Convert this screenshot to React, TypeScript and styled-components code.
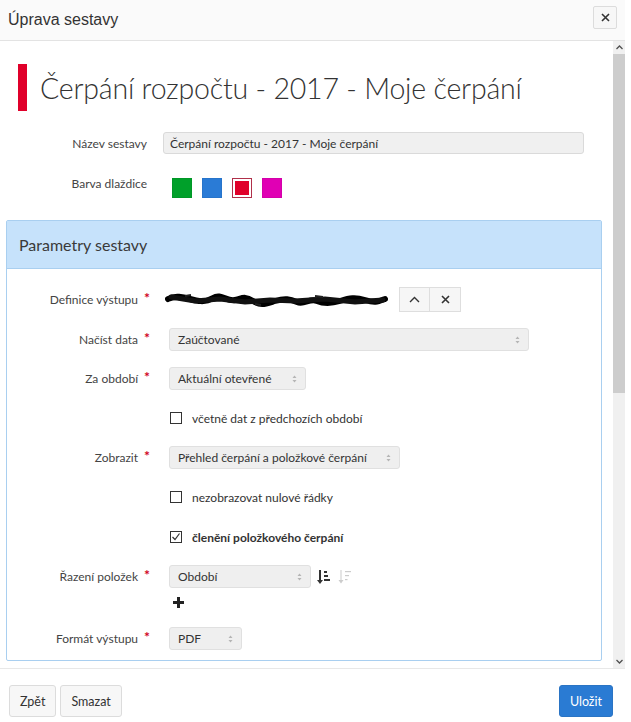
import React from 'react'
import styled, { createGlobalStyle } from 'styled-components'

const GlobalStyle = createGlobalStyle`
  html, body {
    margin: 0;
    padding: 0;
    background: #fff;
  }
  body {
    font-family: Lato, "Open Sans", sans-serif;
    color: #333;
  }
`

const Dialog = styled.div`
  width: 625px;
  height: 722px;
  display: flex;
  flex-direction: column;
  background: #fff;
`

const Header = styled.div`
  height: 40px;
  flex: none;
  display: flex;
  align-items: center;
  justify-content: space-between;
  padding: 0 8px 0 8px;
  border-bottom: 1px solid #e3e3e3;
  background: #fafafa;
`

const HeaderTitle = styled.div`
  font-family: "Liberation Sans", Arial, sans-serif;
  font-size: 16px;
  color: #333;
`

const CloseButton = styled.button`
  width: 24px;
  height: 23px;
  padding: 0;
  margin-top: -6px;
  display: flex;
  align-items: center;
  justify-content: center;
  border: 1px solid #dcdcdc;
  border-radius: 2px;
  background: #f7f7f7;
  color: #333;
`

const Body = styled.div`
  flex: none;
  height: 627px;
  display: flex;
  overflow: hidden;
`

const Content = styled.div`
  flex: 1;
  min-width: 0;
  padding: 23px 0 0 6px;
  overflow: hidden;
`

const Scrollbar = styled.div`
  width: 12px;
  flex: none;
  display: flex;
  flex-direction: column;
  background: #f0f0f0;
`

const ScrollArrow = styled.div`
  height: 13px;
  display: flex;
  align-items: center;
  justify-content: center;
  flex: none;
`

const ScrollTrack = styled.div`
  flex: 1;
  display: flex;
  flex-direction: column;
`

const ScrollThumb = styled.div`
  height: 339px;
  background: #cdcdcd;
`

const TitleRow = styled.div`
  display: flex;
  align-items: center;
  gap: 13px;
  padding-left: 12px;
  margin-bottom: 21px;
`

const TitleBar = styled.div<{ $color: string }>`
  width: 9px;
  height: 47px;
  background: ${({ $color }) => $color};
`

const Title = styled.h1`
  margin: 0;
  font-weight: 300;
  font-size: 28.5px;
  color: #333;
  letter-spacing: -0.2px;
`

const TopForm = styled.div`
  display: grid;
  grid-template-columns: 141px 1fr;
  column-gap: 16px;
  row-gap: 24px;
  align-items: center;
  margin-bottom: 22px;
`

const TopLabel = styled.label<{ $top?: boolean }>`
  text-align: right;
  font-size: 12px;
  color: #444;
  align-self: ${({ $top }) => ($top ? 'start' : 'center')};
  margin-top: ${({ $top }) => ($top ? '-2px' : '0')};
`

const TextInput = styled.div`
  width: 421px;
  height: 22px;
  box-sizing: border-box;
  display: flex;
  align-items: center;
  padding: 0 6px;
  font-size: 12px;
  color: #333;
  background: #f0f0f0;
  border: 1px solid #dadada;
  border-radius: 3px;
`

const Swatches = styled.div`
  display: flex;
  gap: 10px;
  padding-left: 9px;
`

const Swatch = styled.div<{ $color: string; $selected?: boolean }>`
  width: 20px;
  height: 20px;
  box-sizing: border-box;
  background: ${({ $color }) => $color};
  border: ${({ $selected }) => ($selected ? '1px solid #b0304a' : '1px solid rgba(0,0,0,0.05)')};
  box-shadow: ${({ $selected }) => ($selected ? 'inset 0 0 0 2px #fff' : 'none')};
`

const Panel = styled.div`
  width: 594px;
  border: 1px solid #a9cff0;
  border-radius: 2px;
`

const PanelHeader = styled.div`
  height: 47px;
  display: flex;
  align-items: center;
  padding-left: 12px;
  background: #c6e2fb;
  border-bottom: 1px solid #a9cff0;
  font-size: 16px;
  color: #3a3a3a;
`

const PanelBody = styled.div`
  display: flex;
  flex-direction: column;
  gap: 16px;
  padding: 18px 0 10px 0;
`

const Row = styled.div`
  display: grid;
  grid-template-columns: 143px 1fr;
  column-gap: 19px;
  align-items: start;
`

const Label = styled.div<{ $h: number }>`
  height: ${({ $h }) => $h}px;
  display: flex;
  align-items: center;
  justify-content: flex-end;
  font-size: 12px;
  color: #444;
  white-space: nowrap;
`

const Req = styled.span`
  color: #d0021b;
  font-size: 14px;
  font-weight: 700;
  margin-left: 6px;
  position: relative;
  top: -2px;
`

const Control = styled.div`
  display: flex;
  flex-direction: column;
  gap: 5px;
`

const Inline = styled.div`
  display: flex;
  align-items: center;
  gap: 6px;
`

const Select = styled.div<{ $w: number }>`
  width: ${({ $w }) => $w}px;
  height: 23px;
  box-sizing: border-box;
  display: flex;
  align-items: center;
  justify-content: space-between;
  padding: 0 8px;
  font-size: 12px;
  color: #333;
  background: #efefef;
  border: 1px solid #e0e0e0;
  border-radius: 3px;
`

const ScribbleWrap = styled.div`
  display: flex;
  margin-left: -4px;
`

const ButtonGroup = styled.div`
  display: flex;
  margin-left: 4px;
`

const GroupButton = styled.button`
  width: 31px;
  height: 25px;
  padding: 0;
  display: flex;
  align-items: center;
  justify-content: center;
  background: #f6f6f6;
  border: 1px solid #dedede;
  & + & {
    border-left: none;
  }
`

const CheckRow = styled.div<{ $bold?: boolean }>`
  height: 24px;
  display: flex;
  align-items: center;
  gap: 10px;
  padding-left: 1px;
  font-size: 12px;
  font-weight: ${({ $bold }) => ($bold ? 700 : 400)};
  color: #333;
`

const Box = styled.div`
  width: 12px;
  height: 12px;
  box-sizing: border-box;
  border: 1px solid #333;
  background: #fff;
  display: flex;
  align-items: center;
  justify-content: center;
`

const SortIcons = styled.div`
  display: flex;
  gap: 8px;
  align-items: center;
`

const PlusRow = styled.div`
  height: 18px;
  display: flex;
  align-items: center;
  padding-left: 4px;
`

const Footer = styled.div`
  flex: 1;
  display: flex;
  align-items: flex-start;
  justify-content: space-between;
  padding: 16px 12px 0 9px;
  border-top: 1px solid #e8e8e8;
`

const FooterGroup = styled.div`
  display: flex;
  gap: 4px;
`

const FooterButton = styled.button<{ $primary?: boolean }>`
  height: 32px;
  padding: 0 10px;
  font-family: Lato, "Open Sans", sans-serif;
  font-size: 12.5px;
  border-radius: 3px;
  border: 1px solid ${({ $primary }) => ($primary ? '#2a74c4' : '#dcdcdc')};
  background: ${({ $primary }) => ($primary ? '#2a7bd3' : '#f7f7f7')};
  color: ${({ $primary }) => ($primary ? '#fff' : '#333')};
`

const Updown = () => (
  <svg width="5" height="8" viewBox="0 0 5 8">
    <path d="M2.5 0.5 L4.5 3 L0.5 3 Z M2.5 7.5 L4.5 5 L0.5 5 Z" fill="#b5b5b5" />
  </svg>
)

const SelectBox = ({ w, children }: { w: number; children: React.ReactNode }) => (
  <Select $w={w}>
    <span>{children}</span>
    <Updown />
  </Select>
)

const Scribble = () => (
  <svg width="224" height="16" viewBox="0 0 224 16">
    <path
      d="M3 7 C10 3 18 5 25 7 S40 11 48 6 S62 10 70 8 S80 4 88 9 S100 12 110 9 S125 7 132 10 S145 6 152 9 S165 12 175 9 S190 5 200 8 S212 10 220 7"
      stroke="#000"
      strokeWidth="6"
      fill="none"
      strokeLinecap="round"
    />
    <path
      d="M6 5 L30 9 L55 7 L80 10 L105 8 L130 9 L160 7 L190 10 L218 8"
      stroke="#111"
      strokeWidth="5"
      fill="none"
      strokeLinecap="round"
    />
    <path d="M20 4 L26 3 M90 12 L96 13 M150 4 L158 5" stroke="#222" strokeWidth="2" />
  </svg>
)

const Required = () => <Req>*</Req>

export default function App() {
  return (
    <>
      <GlobalStyle />
      <Dialog>
        <Header>
          <HeaderTitle>Úprava sestavy</HeaderTitle>
          <CloseButton aria-label="Zavřít">
            <svg width="9" height="9" viewBox="0 0 9 9">
              <path d="M1 1 L8 8 M8 1 L1 8" stroke="#333" strokeWidth="1.6" />
            </svg>
          </CloseButton>
        </Header>
        <Body>
          <Content>
            <TitleRow>
              <TitleBar $color="#e0002a" />
              <Title>Čerpání rozpočtu - 2017 - Moje čerpání</Title>
            </TitleRow>
            <TopForm>
              <TopLabel>Název sestavy</TopLabel>
              <TextInput>Čerpání rozpočtu - 2017 - Moje čerpání</TextInput>
              <TopLabel $top>Barva dlaždice</TopLabel>
              <Swatches>
                <Swatch $color="#00a02a" />
                <Swatch $color="#2a7bd6" />
                <Swatch $color="#e0002a" $selected />
                <Swatch $color="#e000b4" />
              </Swatches>
            </TopForm>
            <Panel>
              <PanelHeader>Parametry sestavy</PanelHeader>
              <PanelBody>
                <Row>
                  <Label $h={25}>
                    Definice výstupu<Required />
                  </Label>
                  <Inline>
                    <ScribbleWrap>
                      <Scribble />
                    </ScribbleWrap>
                    <ButtonGroup>
                      <GroupButton aria-label="Sbalit">
                        <svg width="11" height="7" viewBox="0 0 11 7">
                          <path d="M1 6 L5.5 1.5 L10 6" stroke="#333" strokeWidth="1.4" fill="none" />
                        </svg>
                      </GroupButton>
                      <GroupButton aria-label="Odebrat">
                        <svg width="9" height="9" viewBox="0 0 9 9">
                          <path d="M1 1 L8 8 M8 1 L1 8" stroke="#333" strokeWidth="1.6" />
                        </svg>
                      </GroupButton>
                    </ButtonGroup>
                  </Inline>
                </Row>
                <Row>
                  <Label $h={23}>
                    Načíst data<Required />
                  </Label>
                  <SelectBox w={360}>Zaúčtované</SelectBox>
                </Row>
                <Row>
                  <Label $h={23}>
                    Za období<Required />
                  </Label>
                  <SelectBox w={137}>Aktuální otevřené</SelectBox>
                </Row>
                <Row>
                  <div />
                  <CheckRow>
                    <Box />
                    včetně dat z předchozích období
                  </CheckRow>
                </Row>
                <Row>
                  <Label $h={23}>
                    Zobrazit<Required />
                  </Label>
                  <SelectBox w={231}>Přehled čerpání a položkové čerpání</SelectBox>
                </Row>
                <Row>
                  <div />
                  <CheckRow>
                    <Box />
                    nezobrazovat nulové řádky
                  </CheckRow>
                </Row>
                <Row>
                  <div />
                  <CheckRow $bold>
                    <Box>
                      <svg width="10" height="10" viewBox="0 0 10 10">
                        <path d="M1.5 5 L4 7.5 L8.5 1.5" stroke="#333" strokeWidth="1.2" fill="none" />
                      </svg>
                    </Box>
                    členění položkového čerpání
                  </CheckRow>
                </Row>
                <Row>
                  <Label $h={23}>
                    Řazení položek<Required />
                  </Label>
                  <Control>
                    <Inline>
                      <SelectBox w={142}>Období</SelectBox>
                      <SortIcons>
                        <svg width="13" height="14" viewBox="0 0 13 14">
                          <rect x="2" y="0" width="2" height="11" fill="#333" />
                          <path d="M0 10 L6 10 L3 14 Z" fill="#333" />
                          <rect x="7" y="1" width="3" height="2" fill="#333" />
                          <rect x="7" y="5" width="4" height="2" fill="#333" />
                          <rect x="7" y="9" width="6" height="2" fill="#333" />
                        </svg>
                        <svg width="13" height="14" viewBox="0 0 13 14">
                          <rect x="2.5" y="0" width="1" height="11" fill="#ccc" />
                          <path d="M0.5 10 L5.5 10 L3 13.5 Z" fill="#ccc" />
                          <rect x="7" y="1" width="6" height="1.2" fill="#ccc" />
                          <rect x="7" y="5" width="4" height="1.2" fill="#ccc" />
                          <rect x="7" y="9" width="2.5" height="1.2" fill="#ccc" />
                        </svg>
                      </SortIcons>
                    </Inline>
                    <PlusRow>
                      <svg width="11" height="11" viewBox="0 0 11 11">
                        <rect x="4" y="0" width="3" height="11" fill="#222" />
                        <rect x="0" y="4" width="11" height="3" fill="#222" />
                      </svg>
                    </PlusRow>
                  </Control>
                </Row>
                <Row>
                  <Label $h={23}>
                    Formát výstupu<Required />
                  </Label>
                  <SelectBox w={73}>PDF</SelectBox>
                </Row>
              </PanelBody>
            </Panel>
          </Content>
          <Scrollbar>
            <ScrollArrow>
              <svg width="7" height="5" viewBox="0 0 7 5">
                <path d="M0.5 4 L3.5 1 L6.5 4" stroke="#505050" strokeWidth="1.3" fill="none" />
              </svg>
            </ScrollArrow>
            <ScrollTrack>
              <ScrollThumb />
            </ScrollTrack>
            <ScrollArrow>
              <svg width="7" height="5" viewBox="0 0 7 5">
                <path d="M0.5 1 L3.5 4 L6.5 1" stroke="#505050" strokeWidth="1.3" fill="none" />
              </svg>
            </ScrollArrow>
          </Scrollbar>
        </Body>
        <Footer>
          <FooterGroup>
            <FooterButton>Zpět</FooterButton>
            <FooterButton>Smazat</FooterButton>
          </FooterGroup>
          <FooterButton $primary>Uložit</FooterButton>
        </Footer>
      </Dialog>
    </>
  )
}
